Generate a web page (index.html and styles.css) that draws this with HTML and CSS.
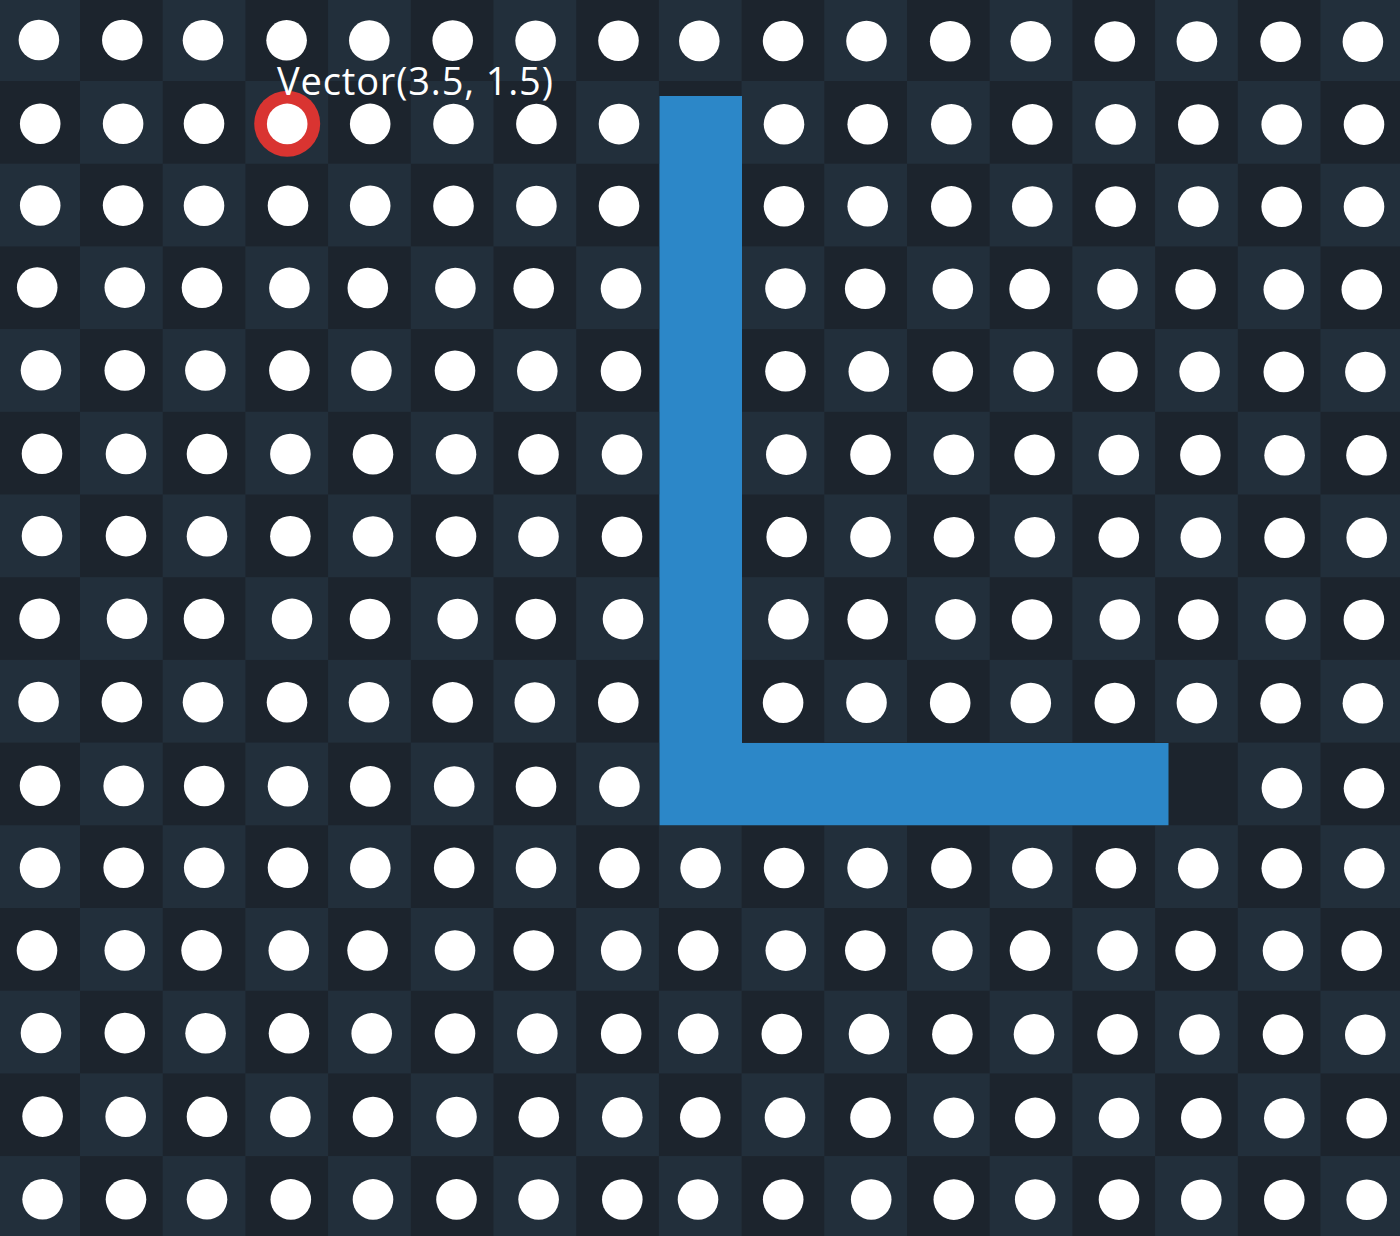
FILE: index.html
```html
<!DOCTYPE html>
<html lang="en">
<head>
<meta charset="utf-8">
<title>Grid</title>
<link rel="stylesheet" href="styles.css">
</head>
<body>
<div class="board">
  <svg class="canvas" id="canvas" width="1400" height="1236" viewBox="0 0 1400 1236" xmlns="http://www.w3.org/2000/svg">
    <defs>
      <pattern id="checker" x="-2.7" y="-1.7" width="165.4" height="165.4" patternUnits="userSpaceOnUse">
        <rect class="cell-dark" x="0" y="0" width="165.4" height="165.4"/>
        <rect class="cell-light" x="0" y="0" width="82.7" height="82.7"/>
        <rect class="cell-light" x="82.7" y="82.7" width="82.7" height="82.7"/>
      </pattern>
    </defs>
    <rect class="floor" x="0" y="0" width="1400" height="1236"/>
    <path class="wall" d="M659.5 96 H742 V743 H1168.5 V825.3 H659.5 Z"/>
    <circle class="cursor-ring" cx="287.2" cy="123.7" r="33"/>
    <g id="dots"></g>
  </svg>
  <div class="label">Vector(3.5, 1.5)</div>
</div>
<script src="app.js"></script>
</body>
</html>
```

FILE: styles.css
```css
html, body {
  margin: 0;
  padding: 0;
  background: #1c242d;
}

.board {
  position: relative;
  width: 1400px;
  height: 1236px;
  overflow: hidden;
  font-family: "Open Sans", "Noto Sans", "Liberation Sans", sans-serif;
}

.canvas {
  display: block;
}

.floor {
  fill: url(#checker);
}

.cell-dark {
  fill: #1c242d;
}

.cell-light {
  fill: #222f3b;
}

.wall {
  fill: #2c87c8;
}

.cursor-ring {
  fill: #d93431;
}

.dot {
  fill: #ffffff;
}

.label {
  position: absolute;
  left: 277px;
  top: 61px;
  color: #ffffff;
  font-size: 38px;
  font-weight: 400;
  line-height: 38px;
  letter-spacing: 0.85px;
  white-space: nowrap;
}
```

FILE: app.js
```js
(function () {
  var N = null;
  var rows = [
    [[38.9,122.3,203,286.6,369.3,452.7,535.6,618.5,699.3,783.1,866.5,950.2,1030.8,1114.8,1196.9,1280.6,1362.9], 40, 41.8],
    [[40.2,123.1,204,287.2,370.2,453.5,536.4,619,N,784,867.7,951.3,1032.3,1115.6,1198.3,1281.7,1364], 123.7, 124.6],
    [[40.2,123.1,204,288,370.2,453.5,536.4,619,N,784,867.7,951.3,1032.3,1115.6,1198.3,1281.7,1364], 205.5, 206.8],
    [[37.2,124.8,202,289.4,367.8,455.4,533.7,621,N,785.5,865.2,952.8,1029.6,1117.5,1195.6,1283.8,1361.8], 287.5, 289.5],
    [[41,124.8,205.4,289.4,371.4,455,537.3,621,N,785.5,868.8,952.8,1033.6,1117.5,1199.6,1283.8,1365.4], 370.3, 372],
    [[42,126,207,290.4,373,456,538.5,622,N,786.3,870.5,953.8,1034.6,1118.8,1200.4,1284.6,1366.5], 453.8, 455.3],
    [[42,126,207,290.4,373,456,538.5,622,N,786.7,870.5,954,1034.8,1118.8,1200.8,1284.6,1366.7], 536, 537.8],
    [[39.6,127,204,292,370,457.7,535.8,623,N,788.4,867.7,955.5,1032,1119.8,1198.3,1285.7,1363.9], 618.7, 619.7],
    [[38.6,121.9,203,287,369,452.7,534.8,618.3,N,783.1,866.5,950.2,1030.8,1114.8,1196.9,1280.6,1362.9], 702, 703.3],
    [[40,123.7,204.2,288,370.3,454.2,536,619.4,N,N,N,N,N,N,N,1281.9,1364], 785.7, 788.3],
    [[40,123.7,204.2,288,370.3,454.2,536,619.4,700.6,784.1,867.6,951.4,1032.3,1115.9,1198.2,1281.8,1364.3], 867.7, 868.3],
    [[37,124.8,201.6,288.8,367.6,455,533.7,621.2,698.2,785.8,865.3,952.4,1030,1117.5,1195.6,1283,1361.7], 950.4, 950.7],
    [[41,124.8,205.6,289,371.7,455,537.3,621.2,698.2,781.8,869,952.4,1034,1117.5,1199.4,1283,1365.3], 1033, 1034.7],
    [[42.6,125.7,207,290.4,373,456.5,538.8,622.3,700.3,785,870.5,953.8,1035.2,1119,1201.3,1284.3,1366.7], 1116.6, 1118.3],
    [[42.6,126,207,290.8,373,456.5,538.6,622.3,698,783.2,871.2,953.8,1035.2,1119,1201.3,1284.3,1366.7], 1199.3, 1199.7]
  ];
  var ns = "http://www.w3.org/2000/svg";
  var g = document.getElementById("dots");
  rows.forEach(function (row) {
    var xs = row[0], yl = row[1], yr = row[2];
    xs.forEach(function (x, c) {
      if (x === null) return;
      var y = yl + (yr - yl) * c / 16;
      var dot = document.createElementNS(ns, "circle");
      dot.setAttribute("class", "dot");
      dot.setAttribute("cx", x);
      dot.setAttribute("cy", y.toFixed(1));
      dot.setAttribute("r", "20.3");
      g.appendChild(dot);
    });
  });
})();
```
